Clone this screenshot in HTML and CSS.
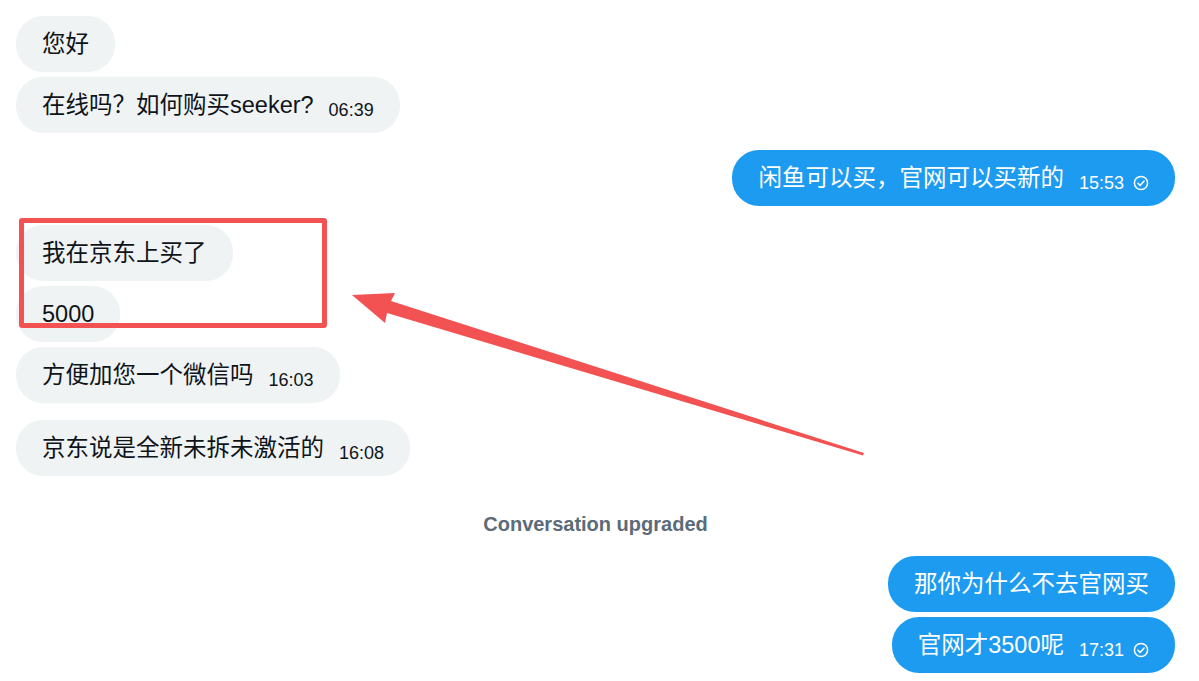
FILE: index.html
```html
<!DOCTYPE html>
<html lang="zh">
<head>
  <meta charset="utf-8" />
  <meta name="viewport" content="width=device-width, initial-scale=1" />
  <title>Messages</title>
  <link rel="stylesheet" href="styles.css">
</head>
<body>
  <div id="chat">
    <div class="group in">
      <div class="bubble">您好</div>
      <div class="bubble">在线吗？如何购买seeker?<span class="time">06:39</span></div>
    </div>

    <div class="group out">
      <div class="bubble">闲鱼可以买，官网可以买新的<span class="time">15:53</span><svg class="seen" viewBox="0 0 16 16"><circle cx="8" cy="8" r="6.6"/><path d="M5 8.3l2.1 2.1 4-4.3"/></svg></div>
    </div>

    <div class="group in marked">
      <div class="bubble">我在京东上买了</div>
      <div class="bubble">5000</div>
      <div class="bubble">方便加您一个微信吗<span class="time">16:03</span></div>
      <div class="highlight"></div>
    </div>

    <div class="group in">
      <div class="bubble">京东说是全新未拆未激活的<span class="time">16:08</span></div>
    </div>

    <div class="notice">Conversation upgraded</div>

    <div class="group out">
      <div class="bubble">那你为什么不去官网买</div>
      <div class="bubble">官网才3500呢<span class="time">17:31</span><svg class="seen" viewBox="0 0 16 16"><circle cx="8" cy="8" r="6.6"/><path d="M5 8.3l2.1 2.1 4-4.3"/></svg></div>
    </div>

    <!-- annotation arrow drawn over the conversation -->
    <svg class="arrow" viewBox="0 0 1199 681">
      <polygon points="352,295 395,293 391,301 864,453 863,455.5 387,313 385,323" />
    </svg>
  </div>
</body>
</html>
```

FILE: styles.css
```css
* {
  margin: 0;
  padding: 0;
  box-sizing: border-box;
}

body {
  background-color: #fff;
  font-family: "Liberation Sans", "Noto Sans CJK SC", sans-serif;
  color: #0f1419;
  overflow: hidden;
}

#chat {
  position: relative;
  width: 1199px;
  height: 681px;
  padding: 16px 24px 0 16px;
  display: flex;
  flex-direction: column;
}

.group {
  display: flex;
  flex-direction: column;
  gap: 5px;
  margin-top: 17px;
}

.group:first-child {
  margin-top: 0;
}

.group.marked {
  position: relative;
  margin-top: 19px;
}

.group.in {
  align-items: flex-start;
}

.group.out {
  align-items: flex-end;
}

.bubble {
  display: flex;
  align-items: baseline;
  height: 56px;
  padding: 12px 26px;
  border-radius: 27px;
  font-size: 23.5px;
  line-height: 32px;
  white-space: nowrap;
}

.in .bubble {
  background-color: #eff3f4;
  color: #0f1419;
}

.out .bubble {
  background-color: #1d9bf0;
  color: #fff;
}

.time {
  margin-left: 15px;
  font-size: 18px;
  position: relative;
  top: 3px;
}

.seen {
  width: 16px;
  height: 16px;
  margin-left: 9px;
  align-self: center;
  position: relative;
  top: 5px;
  fill: none;
  stroke: #fff;
  stroke-width: 1.5;
  stroke-linecap: round;
  stroke-linejoin: round;
}

.notice {
  margin: 36px 0 20px;
  text-align: center;
  font-size: 20px;
  line-height: 24px;
  font-weight: 700;
  color: #5b6b78;
}

.notice + .group {
  margin-top: 0;
}

/* red frame around the two highlighted messages */
.highlight {
  position: absolute;
  top: -7px;
  left: 3px;
  width: 308px;
  height: 110px;
  border: 5px solid #f25252;
  border-radius: 3px;
}

.arrow {
  position: absolute;
  top: 0;
  left: 0;
  width: 1199px;
  height: 681px;
  pointer-events: none;
  fill: #f25252;
}
```
